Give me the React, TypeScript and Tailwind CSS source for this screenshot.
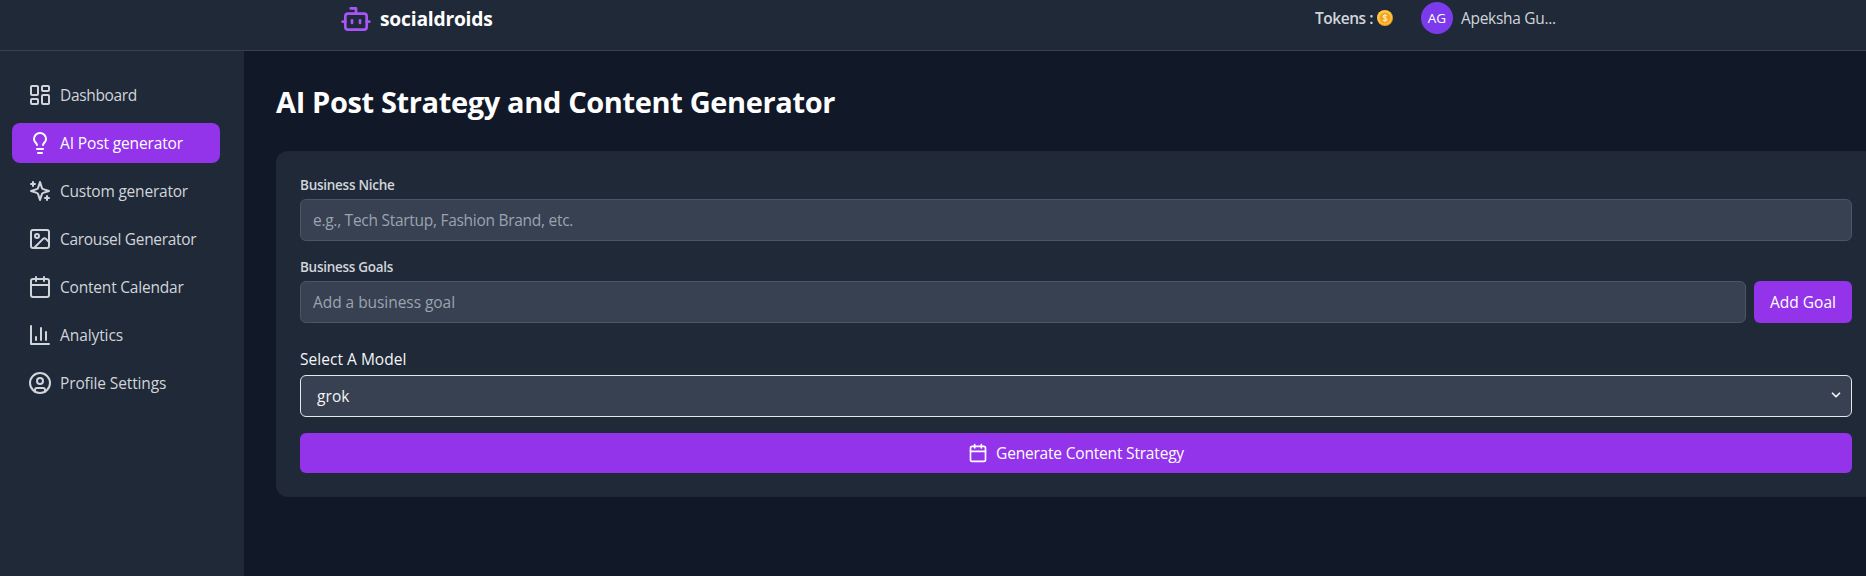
import type { ReactNode } from 'react';
import { Bot, Calendar, ChevronDown, CircleUser, Image, LayoutDashboard, Lightbulb } from 'lucide-react';

interface NavItem {
  label: string;
  icon: ReactNode;
  tracking: string;
  active?: boolean;
}

const SparklesIcon = () => (
  <svg width="24" height="24" viewBox="0 0 24 24" fill="none" stroke="currentColor" strokeWidth="2" strokeLinecap="round" strokeLinejoin="round">
    <path d="m12 3-1.912 5.813a2 2 0 0 1-1.275 1.275L3 12l5.813 1.912a2 2 0 0 1 1.275 1.275L12 21l1.912-5.813a2 2 0 0 1 1.275-1.275L21 12l-5.813-1.912a2 2 0 0 1-1.275-1.275L12 3Z" />
    <path d="M5 3v4M19 17v4M3 5h4M17 19h4" />
  </svg>
);

const BarChartIcon = () => (
  <svg width="24" height="24" viewBox="0 0 24 24" fill="none" stroke="currentColor" strokeWidth="2" strokeLinecap="round" strokeLinejoin="round">
    <path d="M3 3v18h18M18 17V9M13 17V5M8 17v-3" />
  </svg>
);

const CoinIcon = () => (
  <svg width="16" height="16" viewBox="0 0 16 16">
    <circle cx="8" cy="8" r="8" fill="#f39a1c" />
    <circle cx="7.6" cy="7.5" r="7.3" fill="#fdcb45" />
    <circle cx="8" cy="8" r="5.6" fill="#f5a125" />
    <path
      d="M10 6.300C9.700 5.500 9 5.100 8 5.100c-1.100 0-1.900.5-1.900 1.400C6.100 8.300 10 7.600 10 9.500c0 .9-.8 1.400-2 1.400-1 0-1.700-.4-2-1.200M8 4v8"
      fill="none"
      stroke="#ffe9a3"
      strokeWidth="1.2"
    />
  </svg>
);

const navItems: NavItem[] = [
  { label: 'Dashboard', icon: <LayoutDashboard size={24} />, tracking: 'tracking-[-0.33px]' },
  { label: 'AI Post generator', icon: <Lightbulb size={24} />, tracking: 'tracking-[-0.13px]', active: true },
  { label: 'Custom generator', icon: <SparklesIcon />, tracking: 'tracking-[-0.21px]' },
  { label: 'Carousel Generator', icon: <Image size={24} />, tracking: 'tracking-[-0.31px]' },
  { label: 'Content Calendar', icon: <Calendar size={24} />, tracking: 'tracking-[-0.2px]' },
  { label: 'Analytics', icon: <BarChartIcon />, tracking: 'tracking-[-0.09px]' },
  { label: 'Profile Settings', icon: <CircleUser size={24} />, tracking: 'tracking-[-0.12px]' },
];

function Header() {
  return (
    <header className="flex h-[51px] shrink-0 items-start justify-between border-b border-[#374151] bg-[#1f2937] pt-[2px] pl-[340px] pr-[310px]">
      <div className="flex items-center gap-2">
        <Bot size={32} className="text-[#a855f7]" />
        <span className="pt-px text-[19.25px] leading-8 font-bold tracking-[-0.22px] text-white">socialdroids</span>
      </div>
      <div className="flex items-center text-[15.5px] leading-8 text-[#d1d5db]">
        <span className="w-[62px] font-semibold tracking-[-0.46px] whitespace-nowrap">Tokens :</span>
        <CoinIcon />
        <div className="ml-7 flex h-8 w-8 items-center justify-center rounded-full bg-[#7c3aed] text-[13.5px] text-white">
          AG
        </div>
        <span className="ml-2 w-[95px] tracking-[-0.3px] whitespace-nowrap">Apeksha Gu...</span>
      </div>
    </header>
  );
}

function Sidebar() {
  return (
    <aside className="w-[244px] shrink-0 bg-[#1f2937] pt-6 pr-6 pl-3">
      <nav className="flex flex-col gap-2">
        {navItems.map((item) => (
          <a
            key={item.label}
            className={`flex h-10 items-center gap-2 rounded-lg px-4 ${
              item.active ? 'bg-[#9333ea] text-white' : 'text-[#d1d5db]'
            }`}
          >
            {item.icon}
            <span className={`text-[15.5px] leading-6 whitespace-nowrap ${item.tracking}`}>{item.label}</span>
          </a>
        ))}
      </nav>
    </aside>
  );
}

function GeneratorForm() {
  return (
    <div className="w-[1600px] rounded-xl bg-[#1f2937] p-6">
      <label className="mb-1 block text-[13.5px] leading-5 font-semibold tracking-[-0.26px] text-[#d1d5db]">
        Business Niche
      </label>
      <input
        placeholder="e.g., Tech Startup, Fashion Brand, etc."
        className="block h-[42px] w-full rounded-md border border-[#4b5563] bg-[#374151] px-3 text-[15.5px] tracking-[-0.28px] text-white placeholder:text-[#9ca3af]"
      />

      <label className="mt-4 mb-1 block text-[13.5px] leading-5 font-semibold tracking-[-0.28px] text-[#d1d5db]">
        Business Goals
      </label>
      <div className="flex gap-2">
        <input
          placeholder="Add a business goal"
          className="block h-[42px] flex-1 rounded-md border border-[#4b5563] bg-[#374151] px-3 text-[15.5px] tracking-[-0.05px] text-white placeholder:text-[#9ca3af]"
        />
        <button className="w-[98px] rounded-md bg-[#9333ea] pt-0.5 text-[15.5px] text-white">Add Goal</button>
      </div>

      <label className="mt-6 mb-1 block text-[15.5px] leading-6 tracking-[0.03px] text-[#f3f4f6]">Select A Model</label>
      <div className="flex h-[42px] items-center justify-between rounded-md border border-[#e5e7eb] bg-[#374151] pr-2 pl-4 text-[#f3f4f6]">
        <span className="pt-0.5 text-[15.5px] tracking-[0.1px]">grok</span>
        <ChevronDown size={14} strokeWidth={3} className="mb-[3px]" />
      </div>

      <button className="mt-4 flex h-10 w-full items-center justify-center gap-2 rounded-md bg-[#9333ea] text-white">
        <Calendar size={20} />
        <span className="text-[15.5px] leading-6 tracking-[-0.19px]">Generate Content Strategy</span>
      </button>
    </div>
  );
}

export default function App() {
  return (
    <div className="flex h-[576px] w-[1866px] flex-col overflow-hidden bg-[#111827] font-['Open_Sans',sans-serif]">
      <Header />
      <div className="flex min-h-0 flex-1">
        <Sidebar />
        <main className="min-w-0 flex-1 overflow-hidden pt-[33px] pl-8">
          <h1 className="mb-[31px] text-[29px] leading-9 font-bold tracking-[-0.36px] text-white">
            AI Post Strategy and Content Generator
          </h1>
          <GeneratorForm />
        </main>
      </div>
    </div>
  );
}
